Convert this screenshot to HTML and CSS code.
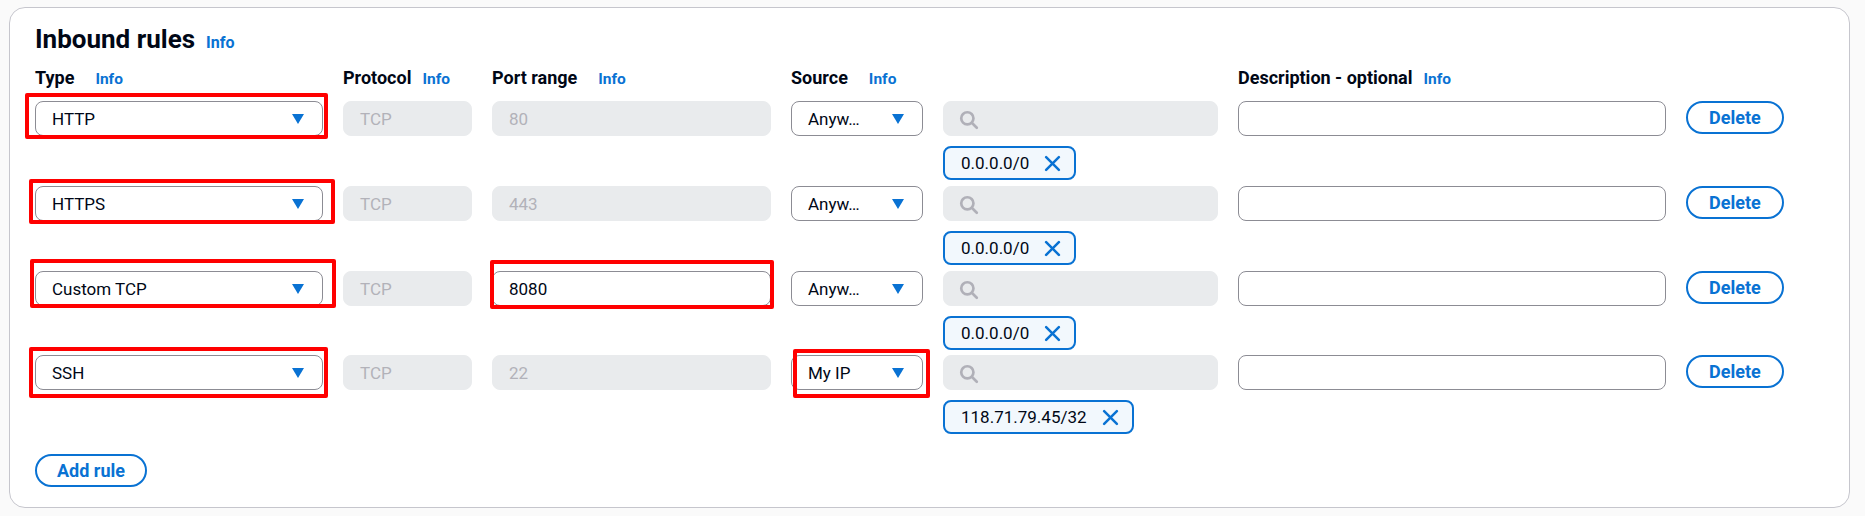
FILE: index.html
```html
<!DOCTYPE html>
<html lang="en">
<head>
<meta charset="utf-8">
<title>Inbound rules</title>
<link rel="stylesheet" href="styles.css">
</head>
<body>
<section class="card">
  <h2 class="title">Inbound rules<a class="info">Info</a></h2>

  <div class="rules">
    <div class="grid head">
      <div class="lbl">Type<a class="info wide">Info</a></div>
      <div class="lbl">Protocol<a class="info">Info</a></div>
      <div class="lbl">Port range<a class="info wide">Info</a></div>
      <div class="lbl">Source<a class="info wide">Info</a></div>
      <div class="lbl"></div>
      <div class="lbl">Description - optional<a class="info">Info</a></div>
      <div class="lbl"></div>
    </div>

    <div class="grid rule">
      <div class="field select">HTTP<svg class="caret" viewBox="0 0 12 10"><polygon points="0,0 12,0 6,10"/></svg><span class="mark m-type1"></span></div>
      <div class="field disabled">TCP</div>
      <div class="field disabled">80</div>
      <div class="field select">Anyw…<svg class="caret" viewBox="0 0 12 10"><polygon points="0,0 12,0 6,10"/></svg></div>
      <div class="value">
        <div class="field search"><svg class="glass" viewBox="0 0 18 18"><circle cx="7.5" cy="7.5" r="5.5"/><line x1="11.5" y1="11.5" x2="16" y2="16"/></svg></div>
        <span class="token">0.0.0.0/0<svg class="x" viewBox="0 0 16 16"><line x1="2" y1="2" x2="14" y2="14"/><line x1="14" y1="2" x2="2" y2="14"/></svg></span>
      </div>
      <div class="field text"></div>
      <button class="btn">Delete</button>
    </div>

    <div class="grid rule">
      <div class="field select">HTTPS<svg class="caret" viewBox="0 0 12 10"><polygon points="0,0 12,0 6,10"/></svg><span class="mark m-type2"></span></div>
      <div class="field disabled">TCP</div>
      <div class="field disabled">443</div>
      <div class="field select">Anyw…<svg class="caret" viewBox="0 0 12 10"><polygon points="0,0 12,0 6,10"/></svg></div>
      <div class="value">
        <div class="field search"><svg class="glass" viewBox="0 0 18 18"><circle cx="7.5" cy="7.5" r="5.5"/><line x1="11.5" y1="11.5" x2="16" y2="16"/></svg></div>
        <span class="token">0.0.0.0/0<svg class="x" viewBox="0 0 16 16"><line x1="2" y1="2" x2="14" y2="14"/><line x1="14" y1="2" x2="2" y2="14"/></svg></span>
      </div>
      <div class="field text"></div>
      <button class="btn">Delete</button>
    </div>

    <div class="grid rule">
      <div class="field select">Custom TCP<svg class="caret" viewBox="0 0 12 10"><polygon points="0,0 12,0 6,10"/></svg><span class="mark m-type3"></span></div>
      <div class="field disabled">TCP</div>
      <div class="field text">8080<span class="mark m-port3"></span></div>
      <div class="field select">Anyw…<svg class="caret" viewBox="0 0 12 10"><polygon points="0,0 12,0 6,10"/></svg></div>
      <div class="value">
        <div class="field search"><svg class="glass" viewBox="0 0 18 18"><circle cx="7.5" cy="7.5" r="5.5"/><line x1="11.5" y1="11.5" x2="16" y2="16"/></svg></div>
        <span class="token">0.0.0.0/0<svg class="x" viewBox="0 0 16 16"><line x1="2" y1="2" x2="14" y2="14"/><line x1="14" y1="2" x2="2" y2="14"/></svg></span>
      </div>
      <div class="field text"></div>
      <button class="btn">Delete</button>
    </div>

    <div class="grid rule last">
      <div class="field select">SSH<svg class="caret" viewBox="0 0 12 10"><polygon points="0,0 12,0 6,10"/></svg><span class="mark m-type4"></span></div>
      <div class="field disabled">TCP</div>
      <div class="field disabled">22</div>
      <div class="field select">My IP<svg class="caret" viewBox="0 0 12 10"><polygon points="0,0 12,0 6,10"/></svg><span class="mark m-src4"></span></div>
      <div class="value">
        <div class="field search"><svg class="glass" viewBox="0 0 18 18"><circle cx="7.5" cy="7.5" r="5.5"/><line x1="11.5" y1="11.5" x2="16" y2="16"/></svg></div>
        <span class="token">118.71.79.45/32<svg class="x" viewBox="0 0 16 16"><line x1="2" y1="2" x2="14" y2="14"/><line x1="14" y1="2" x2="2" y2="14"/></svg></span>
      </div>
      <div class="field text"></div>
      <button class="btn">Delete</button>
    </div>
  </div>

  <button class="btn add">Add rule</button>
</section>
</body>
</html>
```

FILE: styles.css
```css
* { box-sizing: border-box; }

body {
  margin: 7px 15px 8px 9px;
  background: #fafafa;
  font-family: Roboto, "Liberation Sans", sans-serif;
  color: #000716;
}

.card {
  background: #ffffff;
  border: 1px solid #c6c6cd;
  border-radius: 16px;
  padding: 16px 25px 20px 25px;
}

.title {
  margin: 0;
  font-size: 26px;
  line-height: 30px;
  font-weight: 700;
  display: flex;
  align-items: baseline;
}

.info {
  color: #0972d3;
  font-weight: 700;
  font-size: 16px;
  margin-left: 11px;
  cursor: pointer;
}
.lbl .info { font-size: 15.5px; }
.info.wide { margin-left: 21px; }

.rules {
  display: flex;
  flex-direction: column;
  gap: 6px;
  margin-top: 9px;
}

.grid {
  display: grid;
  grid-template-columns: 288px 129px 279px 132px 275px 428px auto;
  column-gap: 20px;
  align-items: start;
}

.head { margin-bottom: 5px; }
.last { margin-top: -1px; }

.lbl {
  font-size: 18px;
  line-height: 22px;
  font-weight: 700;
  display: flex;
  align-items: baseline;
  white-space: nowrap;
}

.field {
  position: relative;
  height: 35px;
  border: 1px solid #8c8c94;
  border-radius: 8px;
  background: #fff;
  padding: 0 16px;
  display: flex;
  align-items: center;
  font-size: 17px;
  color: #000716;
}

.select { justify-content: space-between; padding-right: 18px; }

.caret { width: 12px; height: 10px; fill: #0972d3; }

.disabled {
  background: #e9ebed;
  border-color: #e9ebed;
  color: #b2b2b9;
}

.search {
  align-self: stretch;
  background: #e9ebed;
  border-color: #e9ebed;
  padding-left: 15px;
}

.glass {
  width: 20px;
  height: 20px;
  fill: none;
  stroke: #b0b0b8;
  stroke-width: 2.4;
  stroke-linecap: round;
  margin-top: 2px;
}

.value {
  display: flex;
  flex-direction: column;
  align-items: flex-start;
  gap: 10px;
}

.token {
  height: 34px;
  display: inline-flex;
  align-items: center;
  gap: 15px;
  padding: 0 13px 0 16px;
  border: 2px solid #0972d3;
  border-radius: 8px;
  background: #f2f8fd;
  font-size: 17px;
  color: #000716;
}

.x {
  width: 17px;
  height: 17px;
  stroke: #0972d3;
  stroke-width: 2.4;
  stroke-linecap: round;
}

.btn {
  height: 33px;
  padding: 0 21px;
  border: 2px solid #0972d3;
  border-radius: 20px;
  background: #fff;
  color: #0972d3;
  font-family: inherit;
  font-size: 18px;
  font-weight: 700;
  cursor: pointer;
  justify-self: start;
}

.add {
  display: block;
  margin-top: 20px;
  padding: 0 20px;
}

.mark {
  position: absolute;
  border: 4px solid #ff0000;
  border-radius: 2px;
  pointer-events: none;
}
.m-type1 { top: -9px; left: -11px; right: -6px; bottom: -4px; }
.m-type2 { top: -8px; left: -7px; right: -13px; bottom: -4px; }
.m-type3 { top: -13px; left: -6px; right: -14px; bottom: -3px; }
.m-port3 { top: -12px; left: -3px; right: -4px; bottom: -4px; }
.m-type4 { top: -9px; left: -7px; right: -6px; bottom: -9px; }
.m-src4 { top: -7px; left: 1px; right: -8px; bottom: -9px; }
```
